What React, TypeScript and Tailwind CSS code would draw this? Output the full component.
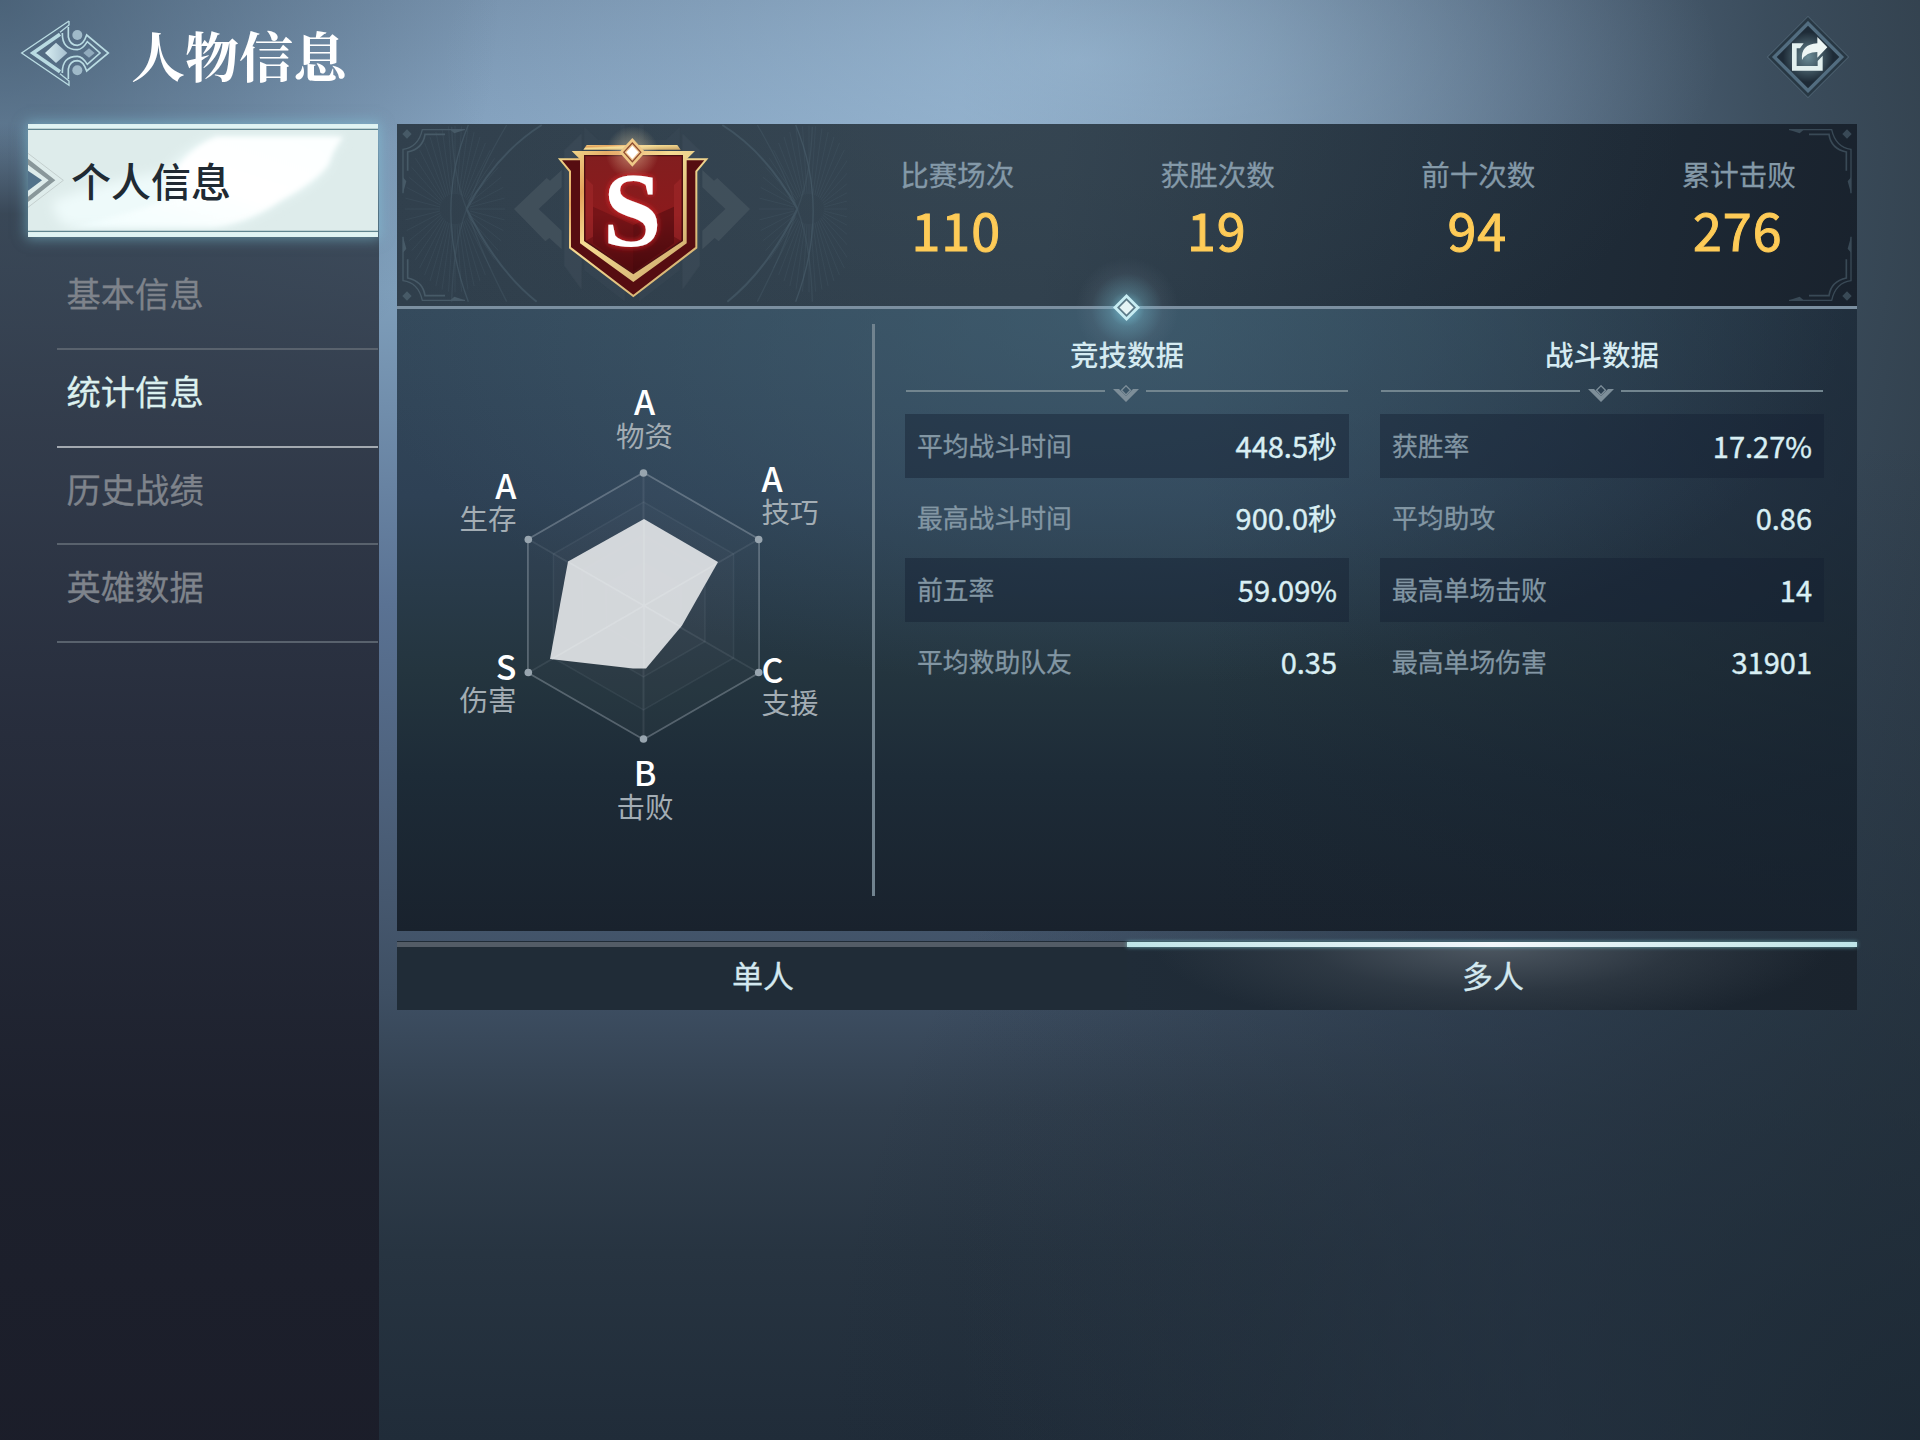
import clsx from 'clsx';

const menu = ['基本信息', '统计信息', '历史战绩', '英雄数据'];

const totals = [
  { label: '比赛场次', value: '110' },
  { label: '获胜次数', value: '19' },
  { label: '前十次数', value: '94' },
  { label: '累计击败', value: '276' },
];

const tables = [
  {
    title: '竞技数据',
    rows: [
      ['平均战斗时间', '448.5秒'],
      ['最高战斗时间', '900.0秒'],
      ['前五率', '59.09%'],
      ['平均救助队友', '0.35'],
    ],
  },
  {
    title: '战斗数据',
    rows: [
      ['获胜率', '17.27%'],
      ['平均助攻', '0.86'],
      ['最高单场击败', '14'],
      ['最高单场伤害', '31901'],
    ],
  },
];

const grades = [
  { grade: 'A', label: '物资', x: 247.5, y: 106, anchor: 'middle' },
  { grade: 'A', label: '技巧', x: 364.5, y: 182.5, anchor: 'start' },
  { grade: 'C', label: '支援', x: 364.5, y: 373.5, anchor: 'start' },
  { grade: 'B', label: '击败', x: 248, y: 477, anchor: 'middle' },
  { grade: 'S', label: '伤害', x: 119.5, y: 370.5, anchor: 'end' },
  { grade: 'A', label: '生存', x: 119.5, y: 189.5, anchor: 'end' },
] as const;

const CX = 246.5;
const CY = 297;

const hexagon = (r: number) =>
  [0, 1, 2, 3, 4, 5]
    .map(i => {
      const a = (Math.PI / 3) * i - Math.PI / 2;
      return `${CX + r * Math.cos(a)},${CY + r * Math.sin(a)}`;
    })
    .join(' ');

function Logo() {
  return (
    <svg className="h-[72px] w-[96px]" viewBox="54 52 288 216" fill="none" stroke="#b9dbe2" strokeWidth="5">
      <defs>
        <linearGradient id="gem" x1="0" y1="0" x2="1" y2="0">
          <stop offset="0" stopColor="#d8eef2" />
          <stop offset="1" stopColor="#a6bfce" />
        </linearGradient>
      </defs>
      <path d="M207 64V76L180 98M207 64L65 160L207 257V244L180 222" strokeWidth="4" />
      <path d="M180 104L99 160L180 216" strokeWidth="11" />
      <path d="M135 160L168 129L202 160L168 190Z" fill="url(#gem)" stroke="none" />
      <path d="M187 100Q186 150 232 150Q247 150 262 126L300 160L262 194Q247 170 232 170Q186 170 187 220" />
      <path d="M205 82V112Q210 137 232 137Q250 136 260 106L325 160L260 214Q250 184 232 183Q210 183 205 208V238" />
      <path d="M250 160L267 146L284 160L267 174Z" fill="#91abbd" stroke="none" />
      <circle cx="232" cy="106" r="15" fill="#a0bac9" stroke="none" />
      <circle cx="232" cy="212" r="15" fill="#a0bac9" stroke="none" />
    </svg>
  );
}

function ShareButton() {
  return (
    <button className="h-[84px] w-[84px]">
      <svg className="h-full w-full" viewBox="197 46 252 252">
        <defs>
          <radialGradient id="shareGlow">
            <stop offset="0" stopColor="#6b8c97" />
            <stop offset=".8" stopColor="#1e2b37" />
          </radialGradient>
        </defs>
        <path d="M323 48L447 172L323 296L199 172Z" fill="#6d8899" opacity=".35" />
        <path d="M323 58L437 172L323 286L209 172Z" fill="#526d80" stroke="#283844" strokeWidth="8" />
        <path d="M323 78L417 172L323 266L229 172Z" fill="url(#shareGlow)" />
        <path d="M310 131H275V213H367V168L352 184V199H289V146H299Z" fill="#e2f0ef" />
        <path d="M351 112L381 143L351 174V157Q317 157 305 181Q300 134 351 131Z" fill="#edf6f5" />
      </svg>
    </button>
  );
}

function Corner({ className }: { className?: string }) {
  return (
    <svg
      className={clsx('absolute h-[76px] w-[72px]', className)}
      viewBox="0 0 216 228"
      fill="none"
      stroke="#475a67"
      strokeWidth="4"
    >
      <path d="M18 208V76Q64 70 76 17H204" />
      <path d="M32 140V84Q78 74 84 31H144" strokeWidth="5" />
      <path d="M160 17H204L172 28ZM18 160V208L28 172Z" fill="#475a67" stroke="none" />
      <path d="M30 16L44 30L30 44L16 30Z" fill="#475a67" stroke="none" />
    </svg>
  );
}

// one half of the line work behind the emblem, mirrored for the other side
function Tracery() {
  const rays = Array.from({ length: 48 }, (_, i) => (Math.PI * 2 * i) / 48);
  return (
    <g fill="none" stroke="#4e6472">
      <g strokeWidth="3" opacity=".22">
        {rays.map(a => (
          <path
            key={a}
            d={`M${195 + 45 * Math.cos(a)} ${297 + 45 * Math.sin(a)}L${195 + 150 * Math.cos(a)} ${297 + 250 * Math.sin(a)}`}
          />
        ))}
      </g>
      <g strokeWidth="4" opacity=".5">
        <path d="M455 45Q320 130 230 297Q320 480 440 575" strokeWidth="6" />
        <path d="M185 50Q190 200 230 297Q270 420 350 575" opacity=".6" />
        <path d="M185 575Q190 400 230 297Q270 180 350 45" opacity=".6" />
        <path d="M235 45Q130 297 235 575" />
      </g>
      <g fill="#46545f" stroke="none" opacity=".75">
        <path d="M372 297L470 204L480 212L515 180V232L446 297L515 362V418L478 384L466 394Z" />
        <path d="M523 120L575 70V540L523 468Z" opacity=".5" />
        <path d="M582 50L625 90H690V45H705V575L582 480Z" opacity=".3" />
      </g>
    </g>
  );
}

function Emblem() {
  return (
    <svg className="h-[183px] w-[450px] shrink-0" viewBox="21 42 1350 549">
      <defs>
        <linearGradient id="gold" x1="0" y1="0" x2="1" y2="1">
          <stop offset="0" stopColor="#f0d489" />
          <stop offset=".2" stopColor="#e3a25c" />
          <stop offset=".4" stopColor="#f5dc93" />
          <stop offset="1" stopColor="#c9a366" />
        </linearGradient>
        <linearGradient id="red" x1="0" y1="0" x2="0" y2="1">
          <stop offset="0" stopColor="#821e1f" />
          <stop offset=".5" stopColor="#8b1a1c" />
          <stop offset="1" stopColor="#520b0f" />
        </linearGradient>
        <radialGradient id="shine">
          <stop offset="0" stopColor="#ffe9b8" stopOpacity=".5" />
          <stop offset="1" stopColor="#ffe9b8" stopOpacity="0" />
        </radialGradient>
        <filter id="redGlow" x="-30%" y="-30%" width="160%" height="160%">
          <feDropShadow dx="0" dy="0" stdDeviation="9" floodColor="#f0262c" />
        </filter>
      </defs>
      <Tracery />
      <g transform="matrix(-1 0 0 1 1452 0)">
        <Tracery />
      </g>
      <path d="M590 105H862L872 119H580Z" fill="url(#gold)" />
      <path
        d="M510 148H600V200H860V148H949L919 184V413L730 558L540 413V184Z"
        fill="#560d11"
        stroke="url(#gold)"
        strokeWidth="6"
      />
      <path d="M545 123H915L890 148V400L730 516L570 400V148Z" fill="url(#gold)" />
      <path d="M584 137H877V392L730 490L584 392Z" fill="url(#red)" stroke="#4c1013" strokeWidth="4" />
      <path d="M588 205L609 225V380L588 392ZM873 205L852 225V380L873 392Z" fill="#a52a2c" opacity=".5" />
      <path d="M609 290L730 345V485L609 400Z" fill="#4a080c" opacity=".3" />
      <path d="M852 290L730 345V485L852 400Z" fill="#3a060a" opacity=".4" />
      <circle cx="727" cy="128" r="80" fill="url(#shine)" />
      <path d="M727 84L766 127L727 170L688 127Z" fill="#efc887" />
      <path d="M727 96L755 127L727 158L699 127Z" fill="#8d4a30" />
      <path d="M727 102L750 127L727 152L704 127Z" fill="#f0c895" />
      <path d="M727 107L745 127L727 147L709 127Z" fill="#fff" />
      <text
        x="727"
        y="407"
        textAnchor="middle"
        className="fill-white font-['Liberation_Serif',serif] text-[318px] font-bold"
        filter="url(#redGlow)"
      >
        S
      </text>
    </svg>
  );
}

function Radar() {
  return (
    <svg className="h-[622px] w-[475px] shrink-0" viewBox="0 0 475 622">
      {[133.5, 104, 71, 43].map((r, i) => (
        <polygon
          key={r}
          points={hexagon(r)}
          fill="#ffffff"
          fillOpacity=".02"
          stroke="#c3ced6"
          strokeOpacity={i === 0 ? 0.32 : 0.08}
          strokeWidth={i === 0 ? 1.8 : 1.5}
        />
      ))}
      <g stroke="#c3ced6" strokeOpacity=".1" strokeWidth="2">
        <path d="M246.500 164V430M131 230L362 364M362 230L131 364" />
      </g>
      {hexagon(133).split(' ').map(p => (
        <circle key={p} cx={p.split(',')[0]} cy={p.split(',')[1]} r="3.8" fill="#98a5af" />
      ))}
      <polygon points="247,210 321,253 285,316.500 249,359.500 236,359.500 153,350 171,252.500" fill="#d9dcdf" fillOpacity=".97" />
      <g stroke="#e6eaec" strokeOpacity=".3" strokeWidth="1.500">
        <path d="M247 211V359M173 254L284 318M319 255L155 350" />
      </g>
      {grades.map(g => (
        <g key={g.label} textAnchor={g.anchor}>
          <text x={g.x} y={g.y} className="fill-white text-[34px] font-medium">
            {g.grade}
          </text>
          <text x={g.x} y={g.y + 31.5} className="fill-[#a3adb4] text-[28.5px]">
            {g.label}
          </text>
        </g>
      ))}
    </svg>
  );
}

function Table({ title, rows }: { title: string; rows: string[][] }) {
  return (
    <section className="w-[444px]">
      <h2 className="h-[60px] text-center text-[28.5px] leading-[58px] font-medium text-[#d5ebf2]">{title}</h2>
      <div className="flex h-[29px] items-start justify-between px-[1px]">
        <div className="mt-[5px] h-[2px] w-[199px] bg-[#72858f]" />
        <svg className="h-[18px] w-[26px]" viewBox="0 0 26 18">
          <path d="M0 4H6L13 11L20 4H26L13 17Z" fill="#7d8e99" />
          <path d="M13 .8L17.500 5.300L13 10L8.500 5.300Z" fill="none" stroke="#7d8e99" strokeWidth="1.300" />
        </svg>
        <div className="mt-[5px] h-[2px] w-[202px] bg-[#72858f]" />
      </div>
      <div className="flex flex-col gap-2">
        {rows.map(([label, value], i) => (
          <div
            key={label}
            className={clsx('flex h-16 items-start justify-between px-[12px]', i % 2 === 0 && 'bg-[#131f31]/45')}
          >
            <span className="text-[25.800px] leading-[62px] text-[#8296a3] [-webkit-text-stroke:0.3px]">{label}</span>
            <span className="text-[29px] leading-[62px] text-[#d9eff4] [-webkit-text-stroke:0.4px]">{value}</span>
          </div>
        ))}
      </div>
    </section>
  );
}

function Sidebar() {
  return (
    <aside className="w-[379px] bg-[linear-gradient(to_bottom,transparent_0,rgba(50,62,76,.86)_90px,rgba(45,53,67,.91)_300px,rgba(36,41,55,.93)_600px,rgba(28,31,43,.95)_1000px,rgba(27,29,41,.96)_100%)] pl-[28px]">
      <div className="relative h-[113px] w-[350px] bg-[#deeceb] shadow-[0_0_12px_2px_rgba(134,206,225,.5)]">
        <svg className="absolute inset-0 h-full w-full" viewBox="84 370 1050 339">
          <defs>
            <linearGradient id="brush" x1="0" y1="1" x2="1" y2="0">
              <stop offset="0" stopColor="#f0fdfd" />
              <stop offset=".5" stopColor="#fff" />
              <stop offset="1" stopColor="#fcffff" />
            </linearGradient>
            <filter id="soft">
              <feGaussianBlur stdDeviation="8" />
            </filter>
            <filter id="softer">
              <feGaussianBlur stdDeviation="18" />
            </filter>
          </defs>
          <path
            d="M200 678Q150 640 160 600Q280 550 500 510Q560 440 640 412H1030Q990 440 985 490Q950 550 840 600Q740 670 640 680Z"
            fill="#eefafa"
            filter="url(#softer)"
          />
          <path
            d="M210 678Q400 640 520 590Q500 540 540 490Q590 430 650 409H1030Q1000 440 985 490Q950 540 840 600Q740 668 640 678Z"
            fill="url(#brush)"
            filter="url(#soft)"
          />
          <path d="M84 371H1134V383H84ZM84 696H1134V708H84Z" fill="#dff4f4" />
          <path d="M84 386H1134M84 692H1134" stroke="#5f858f" strokeWidth="4" />
          <path d="M84 458L190 539L84 620" fill="none" stroke="#c4cfce" strokeWidth="3" />
          <path d="M84 474L166 539L84 604V588L146 539L84 492Z" fill="#89979a" />
          <path d="M84 510L126 539L84 570Z" fill="#52728a" />
        </svg>
        <div className="relative pl-[43px] text-[40px] leading-[112px] font-medium text-[#202a33]">个人信息</div>
      </div>
      <nav className="ml-[29px] w-[321px] pt-[15px]">
        {menu.map((item, i) => (
          <a
            key={item}
            className={clsx(
              'block h-[97.8px] border-b-2 pl-[9.500px] text-[34.300px] leading-[81px] [-webkit-text-stroke:0.3px]',
              i === 1 ? 'border-[#a3a9b0] text-[#dcf0ef]' : 'border-[#59626d] text-[#7e838b]'
            )}
          >
            {item}
          </a>
        ))}
      </nav>
    </aside>
  );
}

export default function App() {
  return (
    <div className="h-[1440px] w-[1920px] overflow-hidden bg-[radial-gradient(ellipse_500px_500px_at_0_0,rgba(56,78,98,.7),transparent),radial-gradient(ellipse_640px_280px_at_1080px_60px,rgba(170,202,228,.5),transparent),radial-gradient(ellipse_1100px_1000px_at_100%_100%,rgba(24,36,48,.75),transparent),linear-gradient(to_right,transparent_50%,rgba(52,68,84,.25)_66%,rgba(52,68,86,.6)_80%,rgba(48,64,78,.85)_92%,rgba(46,60,72,.92)_100%),linear-gradient(to_bottom,#7893ae_0,#86a4c1_10%,#7f9fbb_20%,#5a7293_42%,#46586f_62%,#3e4f63_69%,#313f4e_77%,#273441_87%,#202c39_100%)] font-['Noto_Sans_CJK_SC',sans-serif]">
      <header className="flex h-[124px] items-start justify-between pr-[70px] pl-[18px]">
        <div className="flex pt-[17px]">
          <Logo />
          <h1 className="ml-[17px] font-['Noto_Serif_CJK_SC','Noto_Sans_CJK_SC',serif] text-[54px] leading-[76px] font-bold text-white">
            人物信息
          </h1>
        </div>
        <div className="pt-[15px]">
          <ShareButton />
        </div>
      </header>

      <div className="flex h-[1316px]">
        <Sidebar />
        <main className="ml-[18px] w-[1460px]">
          <div className="relative flex h-[182px] bg-[radial-gradient(ellipse_700px_300px_at_40%_0,rgba(64,80,92,.4),transparent),linear-gradient(100deg,#303f4c_0,#2e3e4b_45%,#22303d_70%,#19222d_100%)]">
            <Corner className="top-0 left-0" />
            <Corner className="bottom-0 left-0 -scale-y-100" />
            <Corner className="top-0 right-0 -scale-x-100 opacity-70" />
            <Corner className="right-0 bottom-0 -scale-100 opacity-70" />
            <Emblem />
            <div className="-ml-5 flex shrink-0 pt-[29px]">
              {totals.map(t => (
                <div key={t.label} className="w-[260.5px] text-center">
                  <div className="text-[28.500px] leading-[42px] text-[#8499a8] [-webkit-text-stroke:0.3px]">{t.label}</div>
                  <div className="pr-[2px] text-[52px] leading-[68px] tracking-[1px] text-[#fecb57] [-webkit-text-stroke:1px]">
                    {t.value}
                  </div>
                </div>
              ))}
            </div>
          </div>

          <div className="relative h-[3px] bg-[#7b8fa0]">
            <div className="absolute -top-[53px] left-[674px] h-[112px] w-[112px] bg-[radial-gradient(circle,rgba(132,215,235,.75)_0,rgba(132,200,220,.3)_22%,rgba(150,170,190,.08)_45%,transparent_65%)]" />
            <svg className="absolute -top-[13px] left-[715px] h-[29px] w-[29px]" viewBox="0 0 29 29">
              <path d="M14.500 1L28 14.500L14.500 28L1 14.500Z" fill="#c8edf3" />
              <path d="M14.500 5L24 14.500L14.500 24L5 14.500Z" fill="#5d7b89" />
              <path d="M14.500 7.500L21.500 14.500L14.500 21.500L7.500 14.500Z" fill="#e6f5f6" />
            </svg>
          </div>

          <div className="flex h-[622px] bg-[radial-gradient(ellipse_750px_380px_at_48%_0,rgba(66,98,116,.65),transparent),linear-gradient(to_right,transparent_55%,rgba(22,33,45,.65)_100%),linear-gradient(to_bottom,#34495b_0,#2e4155_30%,#24353f_58%,#1d2b37_75%,#19222d_100%)]">
            <Radar />
            <div className="mt-[15px] h-[572px] w-[3px] shrink-0 bg-[#71838f]" />
            <div className="flex gap-[31px] pt-[16px] pl-[30px]">
              {tables.map(t => (
                <Table key={t.title} title={t.title} rows={t.rows} />
              ))}
            </div>
          </div>

          <div className="mt-[10px] flex h-[69px] bg-[#202c37] pt-px text-[31px] text-[#d3e8ef] [-webkit-text-stroke:0.3px]">
            <button className="flex w-[730px] flex-col items-center">
              <div className="h-[5px] w-full bg-[#535c66]" />
              <div className="pl-[2px] leading-[55px]">单人</div>
            </button>
            <button className="flex w-[730px] flex-col items-center bg-[radial-gradient(ellipse_340px_90px_at_50%_0,rgba(96,106,116,.75),rgba(80,90,100,.3)_55%,transparent),linear-gradient(to_right,#202c38,#1a232d)]">
              <div className="h-[5px] w-full bg-[linear-gradient(to_right,#bfe5e8,#f2f8fa_50%,#bfe5e8)] shadow-[0_0_4px_rgba(130,205,210,.8)]" />
              <div className="pl-[2px] leading-[55px]">多人</div>
            </button>
          </div>
        </main>
      </div>
    </div>
  );
}
